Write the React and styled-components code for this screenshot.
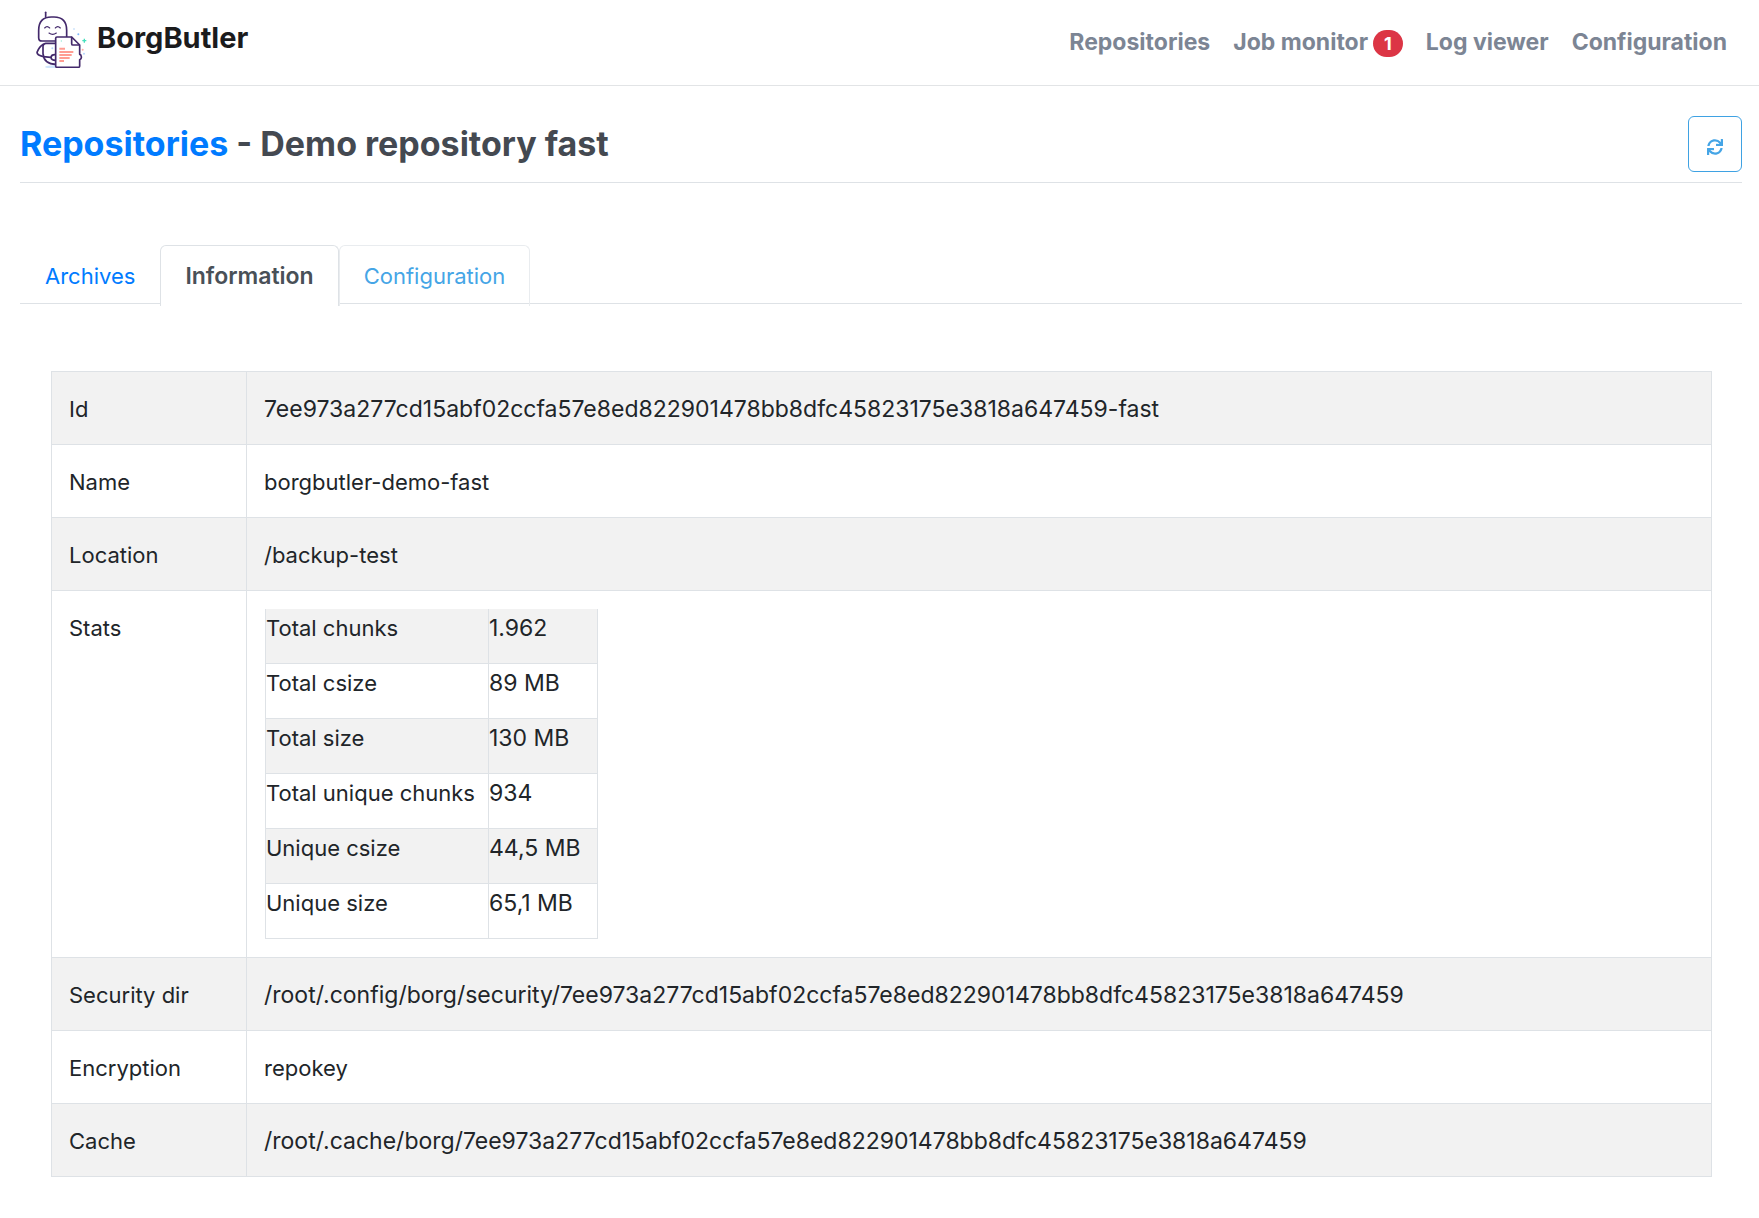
import React from 'react';
import styled, { createGlobalStyle } from 'styled-components';
import { FaSync } from 'react-icons/fa';

const GlobalStyle = createGlobalStyle`
  * { box-sizing: border-box; }
  body {
    margin: 0;
    background: #fff;
    color: #212529;
    font: 400 22px/36px Inter, "Liberation Sans", sans-serif;
  }
`;

const Header = styled.header`
  display: flex;
  justify-content: space-between;
  align-items: center;
  height: 86px;
  padding: 0 32px 0 33px;
  border-bottom: 1px solid #e2e4e6;
`;

const Brand = styled.a`
  display: flex;
  align-items: center;
  gap: 8px;
  padding-bottom: 10px;
  color: #1b1b1d;
  font-size: 29px;
  font-weight: 700;
  text-decoration: none;
`;

const Nav = styled.nav`
  display: flex;
  gap: 23px;
  padding-bottom: 2px;
`;

const NavLink = styled.a`
  display: flex;
  align-items: baseline;
  gap: 5px;
  color: #7c8594;
  font-size: 23px;
  font-weight: 700;
  text-decoration: none;
`;

const Badge = styled.span`
  padding: 0 11px;
  border-radius: 14px;
  background: #dc3545;
  color: #fff;
  font-size: 18px;
  line-height: 27px;
`;

const Main = styled.main`
  padding: 30px 17px 0 20px;
`;

const TitleBar = styled.div`
  display: flex;
  justify-content: space-between;
  align-items: flex-start;
  padding-bottom: 10px;
  border-bottom: 1px solid #dee2e6;
`;

const Title = styled.h1`
  margin: 0;
  color: #444951;
  font-size: 34px;
  font-weight: 700;
  line-height: 56px;
`;

const TitleLink = styled.a`
  color: #007bff;
  text-decoration: none;
`;

const RefreshButton = styled.button`
  display: flex;
  align-items: center;
  justify-content: center;
  width: 54px;
  height: 56px;
  padding: 6px 0 0;
  border: 1px solid #3fa2e3;
  border-radius: 6px;
  background: #fff;
  color: #45a5e6;
  font-size: 16px;
`;

const Tabs = styled.nav`
  display: flex;
  margin-top: 62px;
  border-bottom: 1px solid #dee2e6;
`;

const Tab = styled.a`
  margin-bottom: -3px;
  padding: 12px 24px;
  border: 1px solid ${(p) => p.$edge || 'transparent'};
  border-bottom: 0;
  border-radius: 6px 6px 0 0;
  background: ${(p) => (p.$active ? '#fff' : 'transparent')};
  color: ${(p) => p.$color};
  font-size: ${(p) => (p.$active ? '23px' : '22px')};
  font-weight: ${(p) => (p.$active ? 600 : 400)};
  text-decoration: none;
`;

const Panel = styled.section`
  padding: 67px 30px 40px 31px;
`;

const InfoTable = styled.table`
  width: 100%;
  border-collapse: collapse;
`;

const InfoRow = styled.tr`
  background: ${(p) => (p.$striped ? '#f2f2f2' : '#fff')};
`;

const Label = styled.th`
  width: 195px;
  padding: 19px 17px 17px;
  border: 1px solid #dee2e6;
  font-weight: 400;
  text-align: left;
  vertical-align: top;
`;

const Value = styled.td`
  padding: ${(p) => (p.$nested ? '18px' : '19px 17px 17px')};
  border: 1px solid #dee2e6;
  font-size: ${(p) => (p.$numeric ? '23px' : '22px')};
  vertical-align: top;
`;

const StatsTable = styled.table`
  border-collapse: collapse;
  white-space: nowrap;

  th, td {
    padding: 1px 12px 17px 0;
  }

  tr:first-child > * {
    border-top: 0;
  }
`;

const StatLabel = styled(Label)`
  width: 223px;
`;

const StatValue = styled(Value)`
  width: 109px;
`;

const ink = '#43296b';

function Logo() {
  return (
    <svg width="56" height="61" viewBox="15 6 168 183" fill="none" aria-hidden="true">
      <ellipse cx="82" cy="186" rx="31" ry="5" fill="#cfe4fb" />
      <g stroke={ink} strokeWidth="5" strokeLinecap="round" strokeLinejoin="round">
        <path d="M53 22V37" />
        <path d="M84 108H42Q32 108 32 98V76Q32 36 70 36H78Q116 36 116 76V96" fill="#fff" />
        <path d="M82 115H53Q45 116 45 124V146Q48 178 84 178" fill="#fff" />
        <path d="M46 118Q34 125 27 142Q27 151 46 155L68 157" />
        <path d="M83 149Q70 148 69 157Q70 166 83 166" fill="#fff" />
        <path d="M131 96H87Q83 96 83 100V183Q83 187 87 187H151Q155 187 155 183V164Q161 162 160 156Q160 149 155 148V120Z" fill="#fff" />
        <path d="M131 97V116Q131 120 135 120H154" />
      </g>
      <g stroke={ink} strokeWidth="3.5" strokeLinecap="round">
        <path d="M50 69Q57 61 65 69" />
        <path d="M82 69Q89 61 97 69" />
        <path d="M63 84Q74 92 85 84" />
      </g>
      <path d="M94 131H111M94 141H136M94 150H131M94 159H125M94 168H108" stroke="#ff9d92" strokeWidth="6" />
      <path d="M169 101V113M163 107H175" stroke="#45e0bd" strokeWidth="4" />
      <circle cx="100" cy="108" r="2" fill="#8ce9d4" />
      <circle cx="138" cy="72" r="3" fill="#cfe4fb" />
      <circle cx="151" cy="88" r="3" fill="#7fb8fa" />
      <circle cx="164" cy="134" r="3" fill="#ffada5" />
      <circle cx="168" cy="146" r="3" fill="#b5d5fc" />
      <circle cx="73" cy="130" r="3" fill="#b5d5fc" />
    </svg>
  );
}

const stats = [
  ['Total chunks', '1.962'],
  ['Total csize', '89 MB'],
  ['Total size', '130 MB'],
  ['Total unique chunks', '934'],
  ['Unique csize', '44,5 MB'],
  ['Unique size', '65,1 MB'],
];

function Stats() {
  return (
    <StatsTable>
      <tbody>
        {stats.map(([label, value], i) => (
          <InfoRow key={label} $striped={i % 2 === 0}>
            <StatLabel scope="row">{label}</StatLabel>
            <StatValue $numeric>{value}</StatValue>
          </InfoRow>
        ))}
      </tbody>
    </StatsTable>
  );
}

const repoId = '7ee973a277cd15abf02ccfa57e8ed822901478bb8dfc45823175e3818a647459';

const rows = [
  { label: 'Id', value: `${repoId}-fast`, numeric: true },
  { label: 'Name', value: 'borgbutler-demo-fast' },
  { label: 'Location', value: '/backup-test' },
  { label: 'Stats', value: <Stats />, nested: true },
  { label: 'Security dir', value: `/root/.config/borg/security/${repoId}`, numeric: true },
  { label: 'Encryption', value: 'repokey' },
  { label: 'Cache', value: `/root/.cache/borg/${repoId}`, numeric: true },
];

export default function App() {
  return (
    <>
      <GlobalStyle />
      <Header>
        <Brand href="#"><Logo />BorgButler</Brand>
        <Nav>
          <NavLink href="#repositories">Repositories</NavLink>
          <NavLink href="#jobs">Job monitor<Badge>1</Badge></NavLink>
          <NavLink href="#logs">Log viewer</NavLink>
          <NavLink href="#config">Configuration</NavLink>
        </Nav>
      </Header>
      <Main>
        <TitleBar>
          <Title><TitleLink href="#repositories">Repositories</TitleLink> - Demo repository fast</Title>
          <RefreshButton type="button" aria-label="Refresh"><FaSync /></RefreshButton>
        </TitleBar>
        <Tabs>
          <Tab href="#archives" $color="#007bff">Archives</Tab>
          <Tab href="#information" $active $edge="#dee2e6" $color="#495057">Information</Tab>
          <Tab href="#configuration" $edge="#e9ecef" $color="#45a5e6">Configuration</Tab>
        </Tabs>
        <Panel>
          <InfoTable>
            <tbody>
              {rows.map(({ label, value, numeric, nested }, i) => (
                <InfoRow key={label} $striped={i % 2 === 0}>
                  <Label scope="row">{label}</Label>
                  <Value $numeric={numeric} $nested={nested}>{value}</Value>
                </InfoRow>
              ))}
            </tbody>
          </InfoTable>
        </Panel>
      </Main>
    </>
  );
}
